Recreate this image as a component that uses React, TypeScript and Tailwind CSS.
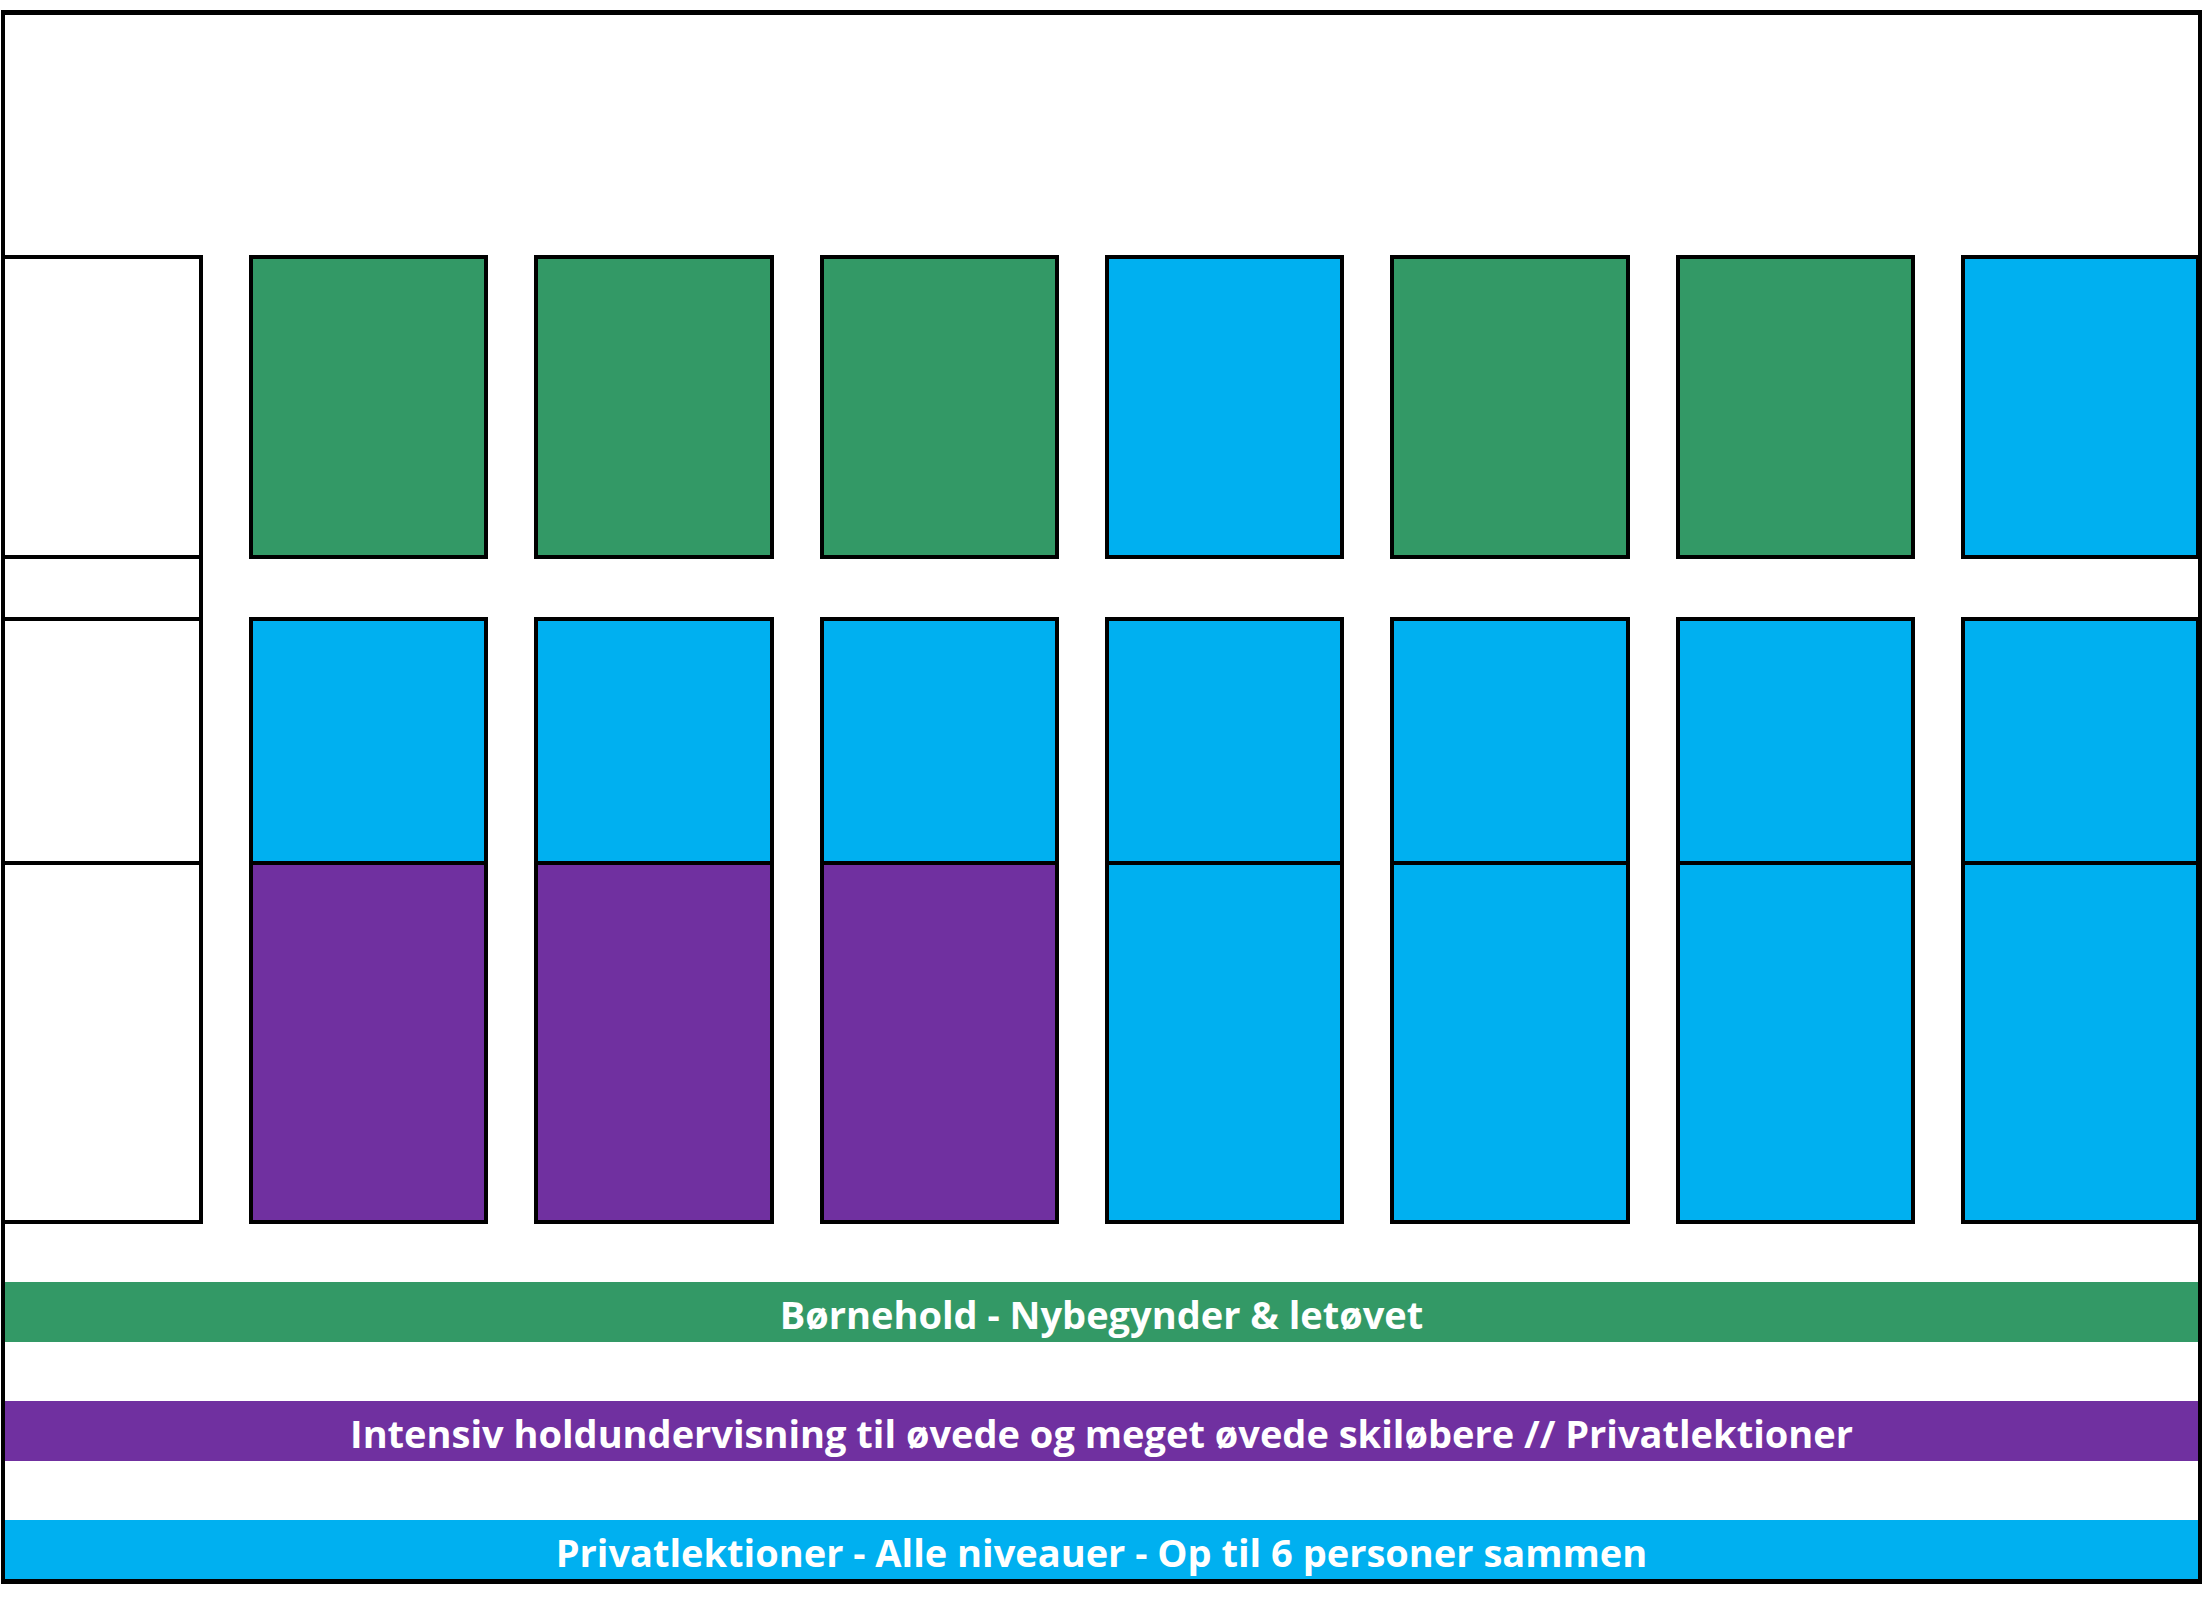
const GREEN = 'bg-[#339966]';
const BLUE = 'bg-[#00b0f0]';
const PURPLE = 'bg-[#7030a0]';

const topRow = [GREEN, GREEN, GREEN, BLUE, GREEN, GREEN, BLUE];
const bottomRow = [PURPLE, PURPLE, PURPLE, BLUE, BLUE, BLUE, BLUE];

const legend = [
  { color: GREEN, label: 'Børnehold - Nybegynder & letøvet' },
  { color: PURPLE, label: 'Intensiv holdundervisning til øvede og meget øvede skiløbere // Privatlektioner' },
  { color: BLUE, label: 'Privatlektioner - Alle niveauer - Op til 6 personer sammen' },
];

function DayColumn({ top, bottom }: { top: string; bottom: string }) {
  return (
    <div className="ml-[46px] flex w-[239.33px] shrink-0 flex-col">
      <div className={`h-[304px] border-4 border-black ${top}`} />
      <div className="h-[58px]" />
      <div className="flex h-[607px] flex-col border-4 border-black">
        <div className={`h-[240px] ${BLUE}`} />
        <div className="h-[4px] bg-black" />
        <div className={`flex-1 ${bottom}`} />
      </div>
    </div>
  );
}

export default function App() {
  return (
    <div className="min-h-screen bg-white" style={{ fontFamily: '"Open Sans", "Noto Sans", sans-serif' }}>
      <div className="ml-[1px] mt-[10px] flex h-[1574px] w-[2201px] flex-col overflow-hidden border-x-4 border-y-[5px] border-black bg-white">
        <div className="h-[240px] shrink-0" />

        {/* schedule grid */}
        <div className="flex h-[969px] shrink-0 overflow-hidden">
          <div className="flex w-[198px] shrink-0 flex-col border-y-4 border-r-4 border-black">
            <div className="h-[296px]" />
            <div className="h-[4px] bg-black" />
            <div className="h-[58px]" />
            <div className="h-[4px] bg-black" />
            <div className="h-[240px]" />
            <div className="h-[4px] bg-black" />
            <div className="flex-1" />
          </div>
          {topRow.map((c, i) => (
            <DayColumn key={i} top={c} bottom={bottomRow[i]} />
          ))}
        </div>

        {/* legend */}
        <div className="flex flex-1 flex-col">
          <div className="h-[58px]" />
          {legend.map((l, i) => (
            <div key={l.label} className="flex flex-col">
              {i > 0 && <div className="h-[59px]" />}
              <div className={`flex h-[60px] items-center justify-center pt-[3px] text-[38px] font-bold leading-none text-white ${l.color}`}>
                {l.label}
              </div>
            </div>
          ))}
        </div>
      </div>
    </div>
  );
}
